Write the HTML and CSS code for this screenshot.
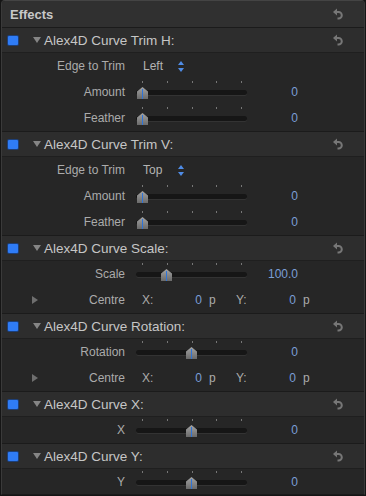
FILE: index.html
```html
<!DOCTYPE html>
<html lang="en">
<head>
  <meta charset="UTF-8">
  <title>Effects</title>
  <link rel="stylesheet" href="styles.css">
</head>
<body>
  <div class="panel">
    <div class="panel-head">
      <span class="panel-title">Effects</span>
      <svg class="reset" width="10" height="12" viewBox="0 0 10 12"><polygon points="0,4 4,0.5 4,7.5"/><path d="M3.5 4 H5.5 A3.3 3.3 0 0 1 5.5 10.6 H4.5"/></svg>
    </div>

    <div class="effect">
      <div class="effect-head">
        <span class="check"></span>
        <svg class="twisty" width="8" height="6" viewBox="0 0 8 6"><polygon points="0,0 8,0 4,6"/></svg>
        <span class="effect-name">Alex4D Curve Trim H:</span>
        <svg class="reset" width="10" height="12" viewBox="0 0 10 12"><polygon points="0,4 4,0.5 4,7.5"/><path d="M3.5 4 H5.5 A3.3 3.3 0 0 1 5.5 10.6 H4.5"/></svg>
      </div>
      <div class="row">
        <div class="lead"><span class="label">Edge to Trim</span></div>
        <span class="popup">Left</span>
        <svg class="stepper" width="6" height="11" viewBox="0 0 6 11"><polygon points="0,4 3,0 6,4"/><polygon points="0,7 3,11 6,7"/></svg>
      </div>
      <div class="row">
        <div class="lead"><span class="label">Amount</span></div>
        <div class="slider"><div class="ticks"><i></i><i></i><i></i><i></i><i></i></div><div class="track"></div><div class="thumb" style="left: 1px"></div></div>
        <span class="value">0</span>
      </div>
      <div class="row">
        <div class="lead"><span class="label">Feather</span></div>
        <div class="slider"><div class="ticks"><i></i><i></i><i></i><i></i><i></i></div><div class="track"></div><div class="thumb" style="left: 1px"></div></div>
        <span class="value">0</span>
      </div>
    </div>

    <div class="effect">
      <div class="effect-head">
        <span class="check"></span>
        <svg class="twisty" width="8" height="6" viewBox="0 0 8 6"><polygon points="0,0 8,0 4,6"/></svg>
        <span class="effect-name">Alex4D Curve Trim V:</span>
        <svg class="reset" width="10" height="12" viewBox="0 0 10 12"><polygon points="0,4 4,0.5 4,7.5"/><path d="M3.5 4 H5.5 A3.3 3.3 0 0 1 5.5 10.6 H4.5"/></svg>
      </div>
      <div class="row">
        <div class="lead"><span class="label">Edge to Trim</span></div>
        <span class="popup">Top</span>
        <svg class="stepper" width="6" height="11" viewBox="0 0 6 11"><polygon points="0,4 3,0 6,4"/><polygon points="0,7 3,11 6,7"/></svg>
      </div>
      <div class="row">
        <div class="lead"><span class="label">Amount</span></div>
        <div class="slider"><div class="ticks"><i></i><i></i><i></i><i></i><i></i></div><div class="track"></div><div class="thumb" style="left: 1px"></div></div>
        <span class="value">0</span>
      </div>
      <div class="row">
        <div class="lead"><span class="label">Feather</span></div>
        <div class="slider"><div class="ticks"><i></i><i></i><i></i><i></i><i></i></div><div class="track"></div><div class="thumb" style="left: 1px"></div></div>
        <span class="value">0</span>
      </div>
    </div>

    <div class="effect">
      <div class="effect-head">
        <span class="check"></span>
        <svg class="twisty" width="8" height="6" viewBox="0 0 8 6"><polygon points="0,0 8,0 4,6"/></svg>
        <span class="effect-name">Alex4D Curve Scale:</span>
        <svg class="reset" width="10" height="12" viewBox="0 0 10 12"><polygon points="0,4 4,0.5 4,7.5"/><path d="M3.5 4 H5.5 A3.3 3.3 0 0 1 5.5 10.6 H4.5"/></svg>
      </div>
      <div class="row">
        <div class="lead"><span class="label">Scale</span></div>
        <div class="slider"><div class="ticks"><i></i><i></i><i></i><i></i><i></i></div><div class="track"></div><div class="thumb" style="left: 25px"></div></div>
        <span class="value">100.0</span>
      </div>
      <div class="row">
        <div class="lead">
          <svg class="twisty closed" width="6" height="8" viewBox="0 0 6 8"><polygon points="0,0 6,4 0,8"/></svg>
          <span class="label">Centre</span>
        </div>
        <span class="axis">X:</span><span class="num">0</span><span class="unit">p</span>
        <span class="axis">Y:</span><span class="num">0</span><span class="unit">p</span>
      </div>
    </div>

    <div class="effect">
      <div class="effect-head">
        <span class="check"></span>
        <svg class="twisty" width="8" height="6" viewBox="0 0 8 6"><polygon points="0,0 8,0 4,6"/></svg>
        <span class="effect-name">Alex4D Curve Rotation:</span>
        <svg class="reset" width="10" height="12" viewBox="0 0 10 12"><polygon points="0,4 4,0.5 4,7.5"/><path d="M3.5 4 H5.5 A3.3 3.3 0 0 1 5.5 10.6 H4.5"/></svg>
      </div>
      <div class="row">
        <div class="lead"><span class="label">Rotation</span></div>
        <div class="slider"><div class="ticks"><i></i><i></i><i></i><i></i><i></i></div><div class="track"></div><div class="thumb" style="left: 50px"></div></div>
        <span class="value">0</span>
      </div>
      <div class="row">
        <div class="lead">
          <svg class="twisty closed" width="6" height="8" viewBox="0 0 6 8"><polygon points="0,0 6,4 0,8"/></svg>
          <span class="label">Centre</span>
        </div>
        <span class="axis">X:</span><span class="num">0</span><span class="unit">p</span>
        <span class="axis">Y:</span><span class="num">0</span><span class="unit">p</span>
      </div>
    </div>

    <div class="effect">
      <div class="effect-head">
        <span class="check"></span>
        <svg class="twisty" width="8" height="6" viewBox="0 0 8 6"><polygon points="0,0 8,0 4,6"/></svg>
        <span class="effect-name">Alex4D Curve X:</span>
        <svg class="reset" width="10" height="12" viewBox="0 0 10 12"><polygon points="0,4 4,0.5 4,7.5"/><path d="M3.5 4 H5.5 A3.3 3.3 0 0 1 5.5 10.6 H4.5"/></svg>
      </div>
      <div class="row">
        <div class="lead"><span class="label">X</span></div>
        <div class="slider"><div class="ticks"><i></i><i></i><i></i><i></i><i></i></div><div class="track"></div><div class="thumb" style="left: 50px"></div></div>
        <span class="value">0</span>
      </div>
    </div>

    <div class="effect">
      <div class="effect-head">
        <span class="check"></span>
        <svg class="twisty" width="8" height="6" viewBox="0 0 8 6"><polygon points="0,0 8,0 4,6"/></svg>
        <span class="effect-name">Alex4D Curve Y:</span>
        <svg class="reset" width="10" height="12" viewBox="0 0 10 12"><polygon points="0,4 4,0.5 4,7.5"/><path d="M3.5 4 H5.5 A3.3 3.3 0 0 1 5.5 10.6 H4.5"/></svg>
      </div>
      <div class="row">
        <div class="lead"><span class="label">Y</span></div>
        <div class="slider"><div class="ticks"><i></i><i></i><i></i><i></i><i></i></div><div class="track"></div><div class="thumb" style="left: 50px"></div></div>
        <span class="value">0</span>
      </div>
    </div>
  </div>
</body>
</html>
```

FILE: styles.css
```css
body {
  margin: 0;
  background-color: #151515;
  font-family: 'Liberation Sans', Arial, sans-serif;
  font-size: 12px;
}

.panel {
  width: 362px;
  height: 493px;
  margin: 0 0 0 1px;
  background-color: #262626;
  border: 1px solid #3a3a3a;
  border-top-color: #444;
  border-bottom-color: #1b1b1b;
  border-radius: 4px 4px 0 0;
  overflow: hidden;
}

.panel-head {
  display: flex;
  align-items: center;
  height: 26px;
  padding: 0 21px 0 8px;
  background-color: #303030;
}

.panel-title {
  flex: 1;
  font-weight: bold;
  font-size: 13px;
  color: #c8c8c8;
}

.reset {
  fill: #777;
}

.reset path {
  fill: none;
  stroke: #777;
  stroke-width: 2;
}

.effect-head {
  display: flex;
  align-items: center;
  height: 24px;
  padding: 0 21px 0 6px;
  background-color: #2d2d2d;
  border-top: 1px solid #1b1b1b;
  border-bottom: 1px solid #1f1f1f;
}

.check {
  width: 10px;
  height: 9px;
  background-color: #2f7cf6;
  border-radius: 1px;
  box-shadow: 0 0 0 1px #1d3f78;
  margin-right: 15px;
}

.twisty {
  fill: #858585;
  margin-right: 3px;
}

.effect-name {
  flex: 1;
  font-size: 13.5px;
  color: #c6c6c6;
}

.row {
  display: flex;
  align-items: center;
  height: 26px;
}

.lead {
  width: 123px;
  display: flex;
  align-items: center;
  justify-content: flex-end;
  box-sizing: border-box;
  padding-left: 30px;
}

.lead .closed {
  fill: #6e6e6e;
  margin-right: auto;
}

.label {
  color: #ababab;
}

.popup {
  margin-left: 18px;
  width: 35px;
  color: #b4b4b4;
}

.stepper {
  fill: #4f8ce6;
}

.slider {
  position: relative;
  width: 111px;
  height: 26px;
  margin-left: 11px;
}

.ticks {
  display: flex;
  justify-content: space-between;
  margin: 2px 5px 0 6px;
}

.ticks i {
  width: 1px;
  height: 2px;
  background-color: #777;
}

.track {
  position: absolute;
  left: 0;
  right: 0;
  top: 11px;
  height: 5px;
  border-radius: 3px;
  background-color: #161616;
  box-shadow: 0 1px 0 #333;
}

.thumb {
  position: absolute;
  top: 8px;
  width: 11px;
  height: 12px;
  background: linear-gradient(#a4a4a4, #6a6a6a);
  clip-path: polygon(50% 0, 100% 38%, 100% 100%, 0 100%, 0 38%);
}

.thumb::after {
  content: '';
  position: absolute;
  left: 5px;
  top: 2px;
  width: 1px;
  height: 10px;
  background-color: #2e74d8;
}

.value {
  width: 51px;
  text-align: right;
  color: #7b9ed6;
}

.axis {
  margin-left: 17px;
  width: 40px;
  color: #ababab;
}

.num {
  width: 20px;
  text-align: right;
  color: #7b9ed6;
}

.unit {
  margin-left: 7px;
  width: 10px;
  color: #ababab;
}
```
